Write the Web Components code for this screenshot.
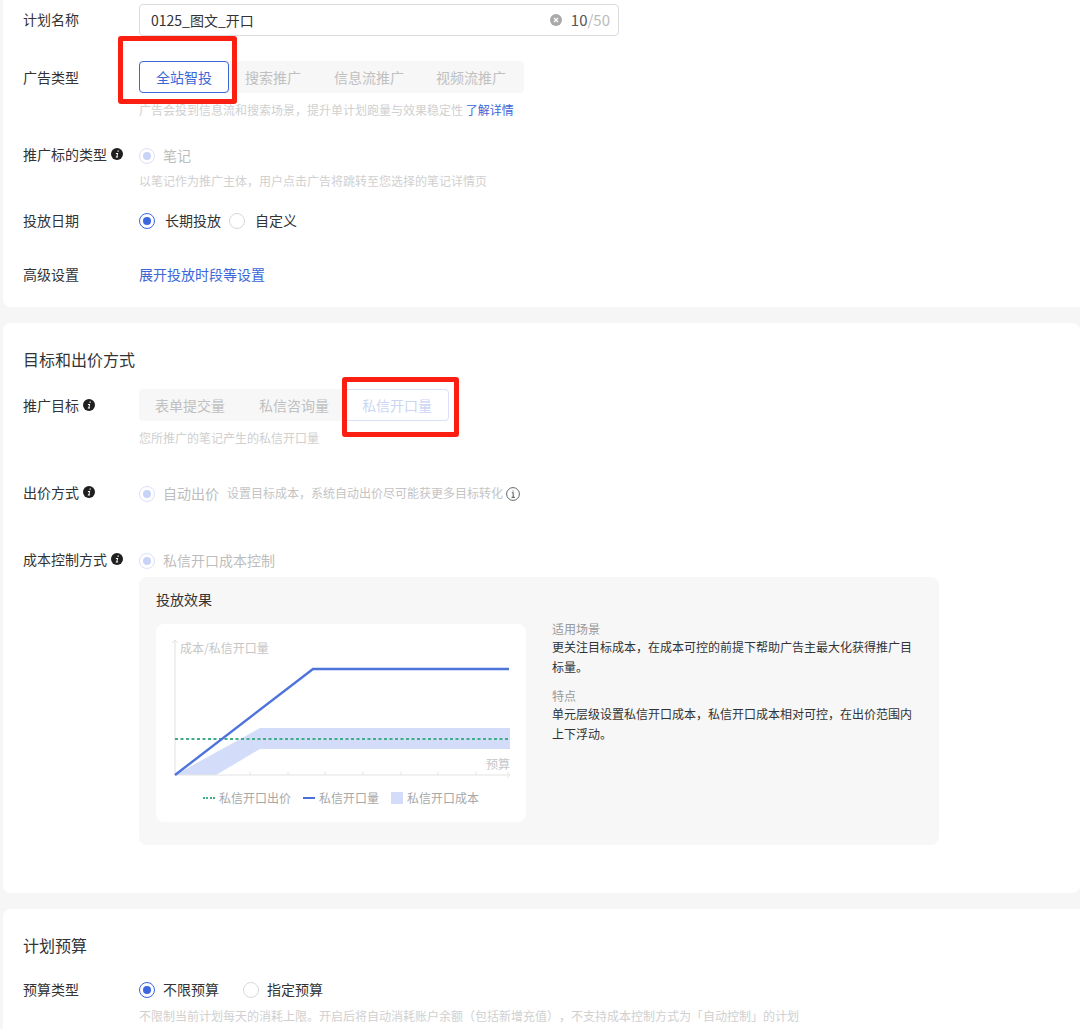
<!DOCTYPE html>
<html lang="zh">
<head>
<meta charset="utf-8">
<title>计划设置</title>
<style>
  html, body { margin: 0; height: 1029px; overflow: hidden; background: #f6f6f6; }
  body { position: relative; font: 14px/22px "Noto Sans CJK SC", "Noto Sans", sans-serif; color: #333; text-spacing-trim: space-all; }
</style>
</head>
<body>

<plan-card style="height:307px">
  <form-row label="计划名称" style="margin-top:4px;--lift:-3px"><name-input></name-input></form-row>
  <form-row label="广告类型" style="margin-top:25px;--lift:0px">
    <tab-group style="padding-right:2px">
      <tab-item state="on">全站智投</tab-item>
      <tab-item>搜索推广</tab-item>
      <tab-item style="margin-left:1px">信息流推广</tab-item>
      <tab-item>视频流推广</tab-item>
    </tab-group>
  </form-row>
  <hint-text style="margin-top:8px">广告会投到信息流和搜索场景，提升单计划跑量与效果稳定性 <a-link small>了解详情</a-link></hint-text>
  <form-row label="推广标的类型" info style="margin-top:26px;--lift:-4px"><radio-item state="locked">笔记</radio-item></form-row>
  <hint-text style="margin-top:5px">以笔记作为推广主体，用户点击广告将跳转至您选择的笔记详情页</hint-text>
  <form-row label="投放日期" style="margin-top:20px">
    <radio-item state="on" gap="10" style="margin-right:8px">长期投放</radio-item>
    <radio-item gap="10">自定义</radio-item>
  </form-row>
  <form-row label="高级设置" style="margin-top:32px"><a-link>展开投放时段等设置</a-link></form-row>
</plan-card>

<plan-card style="height:570px;margin-top:16px">
  <card-title style="margin-top:24px">目标和出价方式</card-title>
  <form-row label="推广目标" info style="margin-top:18px;--lift:0px">
    <tab-group>
      <tab-item>表单提交量</tab-item>
      <tab-item style="margin-left:2px">私信咨询量</tab-item>
      <tab-item state="locked">私信开口量</tab-item>
    </tab-group>
  </form-row>
  <hint-text style="margin-top:8px">您所推广的笔记产生的私信开口量</hint-text>
  <form-row label="出价方式" info style="margin-top:36px;--lift:-4px">
    <radio-item state="locked">自动出价</radio-item>
    <span style="font-size:12px;color:#c4c4c4;margin-left:8px;margin-top:-2px">设置目标成本，系统自动出价尽可能获更多目标转化</span>
    <ring-info></ring-info>
  </form-row>
  <form-row label="成本控制方式" info style="margin-top:45px;--lift:-4px"><radio-item state="locked">私信开口成本控制</radio-item></form-row>
  <effect-panel style="margin-top:5px">
    <cost-chart></cost-chart>
    <note-block slot="notes" head="适用场景">更关注目标成本，在成本可控的前提下帮助广告主最大化获得推广目标量。</note-block>
    <note-block slot="notes" head="特点" style="margin-top:10px">单元层级设置私信开口成本，私信开口成本相对可控，在出价范围内上下浮动。</note-block>
  </effect-panel>
</plan-card>

<plan-card style="height:120px;margin-top:16px;border-radius:8px 0 0 0">
  <card-title style="margin-top:24px">计划预算</card-title>
  <form-row label="预算类型" style="margin-top:22px">
    <radio-item state="on" style="margin-right:24px">不限预算</radio-item>
    <radio-item>指定预算</radio-item>
  </form-row>
  <hint-text style="margin-top:6px">不限制当前计划每天的消耗上限。开启后将自动消耗账户余额（包括新增充值），不支持成本控制方式为「自动控制」的计划</hint-text>
</plan-card>

<red-box style="left:118px;top:36px;width:119px;height:68px"></red-box>
<red-box style="left:342px;top:377px;width:117px;height:60px"></red-box>

<script>
// every element is just a template string in its own shadow root
function make(name, html, setup) {
  customElements.define(name, class extends HTMLElement {
    constructor() {
      super()
      this.attachShadow({ mode: 'open' })
      this.shadowRoot.innerHTML = html
    }
    connectedCallback() {
      if (setup) setup(this, this.shadowRoot)
    }
  })
}

const infoDot = `<svg width="12" height="12" viewBox="0 0 12 12"><circle cx="6" cy="6" r="6" fill="#1f1f1f"/><path d="M6.7 2.4h1.2l-.3 1.3H6.4zM5 5h2.2L6.4 8.6h.8l-.2.9H4.7l.2-.9h.5L6 5.9H4.8z" fill="#fff"/></svg>`

make('plan-card', `<style>
  :host { display: block; margin-left: 3px; padding-left: 20px; background: #fff; border-radius: 8px; overflow: hidden; box-sizing: border-box; }
  :host(:first-of-type) { border-radius: 0 0 0 8px; }
</style><slot></slot>`)

make('card-title', `<style>
  :host { display: block; font-size: 16px; line-height: 24px; color: #333; }
</style><slot></slot>`)

// min-height keeps the row tall when label or text is lifted a pixel with a negative margin
make('form-row', `<style>
  :host { display: flex; align-items: center; min-height: 22px; }
  .label { width: 116px; flex: none; display: flex; align-items: center; gap: 4px; color: #333; line-height: 22px; margin-top: var(--lift, -2px); }
  svg { display: none; }
  :host([info]) svg { display: block; }
  .body { display: flex; align-items: center; flex: 1; }
</style>
<div class="label"><span id="t"></span>${infoDot}</div>
<div class="body"><slot></slot></div>`, (el, root) => {
  root.getElementById('t').textContent = el.getAttribute('label')
})

make('name-input', `<style>
  :host { display: flex; align-items: center; width: 480px; height: 32px; box-sizing: border-box; padding: 0 8px 0 11px; border: 1px solid #dcdcdc; border-radius: 4px; background: #fff; color: #333; }
  .v { flex: 1; }
  svg { margin-right: 9px; }
  .n { color: #bbb; font-size: 15px; }
  .n b { font-weight: 400; color: #555; }
</style>
<span class="v">0125_图文_开口</span>
<svg width="12" height="12" viewBox="0 0 12 12"><circle cx="6" cy="6" r="6" fill="#a9a9a9"/><path d="M4 4l4 4M8 4l-4 4" stroke="#fff" stroke-width="1.2"/></svg>
<span class="n"><b>10</b>/50</span>`)

make('tab-group', `<style>
  :host { display: inline-flex; height: 32px; background: #f7f7f7; border-radius: 4px; }
</style><slot></slot>`)

make('tab-item', `<style>
  :host { display: flex; align-items: center; padding: 0 16px; color: #c0c0c0; line-height: 22px; border-radius: 4px; box-sizing: border-box; }
  :host([state=on]) { background: #fff; color: #3b66d8; border: 1px solid #3b66d8; }
  :host([state=locked]) { background: #fff; color: #cbd6f6; border: 1px solid #d9e0f8; }
</style><slot></slot>`)

make('hint-text', `<style>
  :host { display: block; margin-left: 116px; font-size: 12px; line-height: 18px; color: #d0d0d0; white-space: nowrap; }
</style><slot></slot>`)

make('a-link', `<style>
  :host { color: #3b66d8; }
  :host(:not([small])) { display: block; margin-top: -2px; }
  :host([small]) { font-size: 12px; }
</style><slot></slot>`)

make('radio-item', `<style>
  :host { display: inline-flex; align-items: center; color: #333; }
  i { width: 16px; height: 16px; box-sizing: border-box; border: 1px solid #d8d8d8; border-radius: 50%; background: #fff; display: flex; align-items: center; justify-content: center; margin-right: 8px; }
  i::after { content: ""; width: 8px; height: 8px; border-radius: 50%; display: none; }
  span { margin-top: -2px; }
  :host([state=on]) i { border-color: #3b66e0; }
  :host([state=on]) i::after { display: block; background: #3b66e0; }
  :host([state=locked]) { color: #bdbdbd; }
  :host([state=locked]) i { border-color: #dbe1f8; }
  :host([state=locked]) i::after { display: block; background: #c8d3f8; }
</style><i></i><span><slot></slot></span>`, (el, root) => {
  if (el.hasAttribute('gap')) root.querySelector('i').style.marginRight = el.getAttribute('gap') + 'px'
})

make('ring-info', `<style>
  :host { display: block; margin-left: 3px; height: 14px; }
  svg { display: block; }
</style>
<svg width="14" height="14" viewBox="0 0 14 14" fill="none" stroke="#666"><circle cx="7" cy="7" r="6.4"/><path d="M5.8 5.8H7.2V10.4M5.6 10.4H8.8M7 3.4V4.6" stroke-width="1.1"/></svg>`)

make('effect-panel', `<style>
  :host { display: block; margin-left: 116px; width: 800px; height: 268px; box-sizing: border-box; padding: 11px 17px 0; background: #f7f7f7; border-radius: 8px; }
  h4 { margin: 0 0 14px; font-size: 14px; font-weight: 400; line-height: 22px; color: #333; }
  .cols { display: flex; gap: 26px; }
  .notes { width: 362px; margin-top: -4px; }
</style>
<h4>投放效果</h4>
<div class="cols"><slot></slot><div class="notes"><slot name="notes"></slot></div></div>`)

make('note-block', `<style>
  :host { display: block; font-size: 12px; line-height: 20px; color: #333; }
  .h { color: #999; line-height: 17px; display: block; }
</style><span class="h"></span><slot></slot>`, (el, root) => {
  root.querySelector('.h').textContent = el.getAttribute('head')
})

make('cost-chart', `<style>
  :host { display: block; width: 370px; height: 198px; background: #fff; border-radius: 8px; font-size: 12px; color: #a8a8a8; }
  svg { display: block; }
  text { font: 12px "Noto Sans CJK SC", sans-serif; fill: #c6c6c6; }
  .legend { display: flex; align-items: center; justify-content: center; height: 24px; line-height: 24px; }
  .legend i { display: block; width: 12px; margin-right: 4px; }
  .legend span { margin-right: 12px; }
  .legend span:last-child { margin-right: 0; }
  .g { border-top: 2px dotted #3fae86; }
  .b { border-top: 2px solid #4a6fd8; }
  .s { height: 12px; background: #d3ddfa; }
</style>
<svg width="370" height="162" viewBox="156 624 370 162">
  <polygon points="175,775 260,728 510,728 510,749 260,749 216,775" fill="#d3ddfa"/>
  <path d="M175 640V775H510" fill="none" stroke="#e4e4e4" stroke-width="1.2"/>
  <path d="M172 643l3-3 3 3M507 772l3 3-3 3" fill="none" stroke="#e4e4e4"/>
  <path d="M250 772v3M288 772v3M325 772v3M363 772v3M401 772v3M438 772v3M476 772v3" stroke="#e4e4e4"/>
  <path d="M175 739H510" stroke="#3fae86" stroke-width="2" stroke-dasharray="3 2.5"/>
  <path d="M175 775L313 669H509" fill="none" stroke="#4e74dc" stroke-width="2.4"/>
  <text x="180" y="653">成本/私信开口量</text>
  <text x="486" y="769">预算</text>
</svg>
<div class="legend">
  <i class="g"></i><span>私信开口出价</span>
  <i class="b"></i><span>私信开口量</span>
  <i class="s"></i><span>私信开口成本</span>
</div>`)

make('red-box', `<style>
  :host { position: absolute; box-sizing: border-box; border: 5px solid #fb1f12; border-radius: 3px; }
</style>`)
</script>
</body>
</html>
